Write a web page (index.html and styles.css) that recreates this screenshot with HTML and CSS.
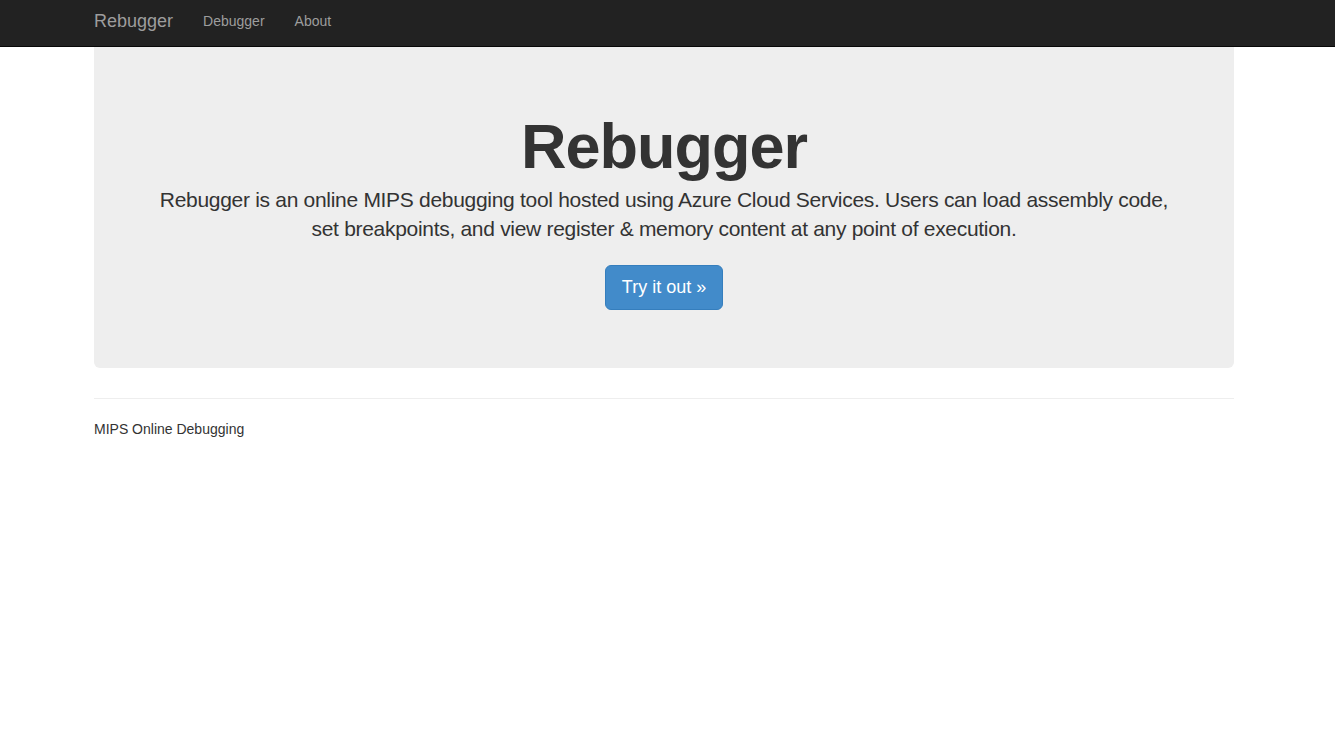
FILE: index.html
```html
<!DOCTYPE html>
<html lang="en">
<head>
<meta charset="utf-8">
<title>Rebugger</title>
<link rel="stylesheet" href="styles.css">
</head>
<body>
<nav class="navbar">
  <div class="container nav-inner">
    <a class="brand" href="#">Rebugger</a>
    <ul class="nav-links">
      <li><a href="#">Debugger</a></li>
      <li><a href="#">About</a></li>
    </ul>
  </div>
</nav>
<div class="container">
  <div class="jumbotron">
    <h1 class="title">Rebugger</h1>
    <p class="lead">Rebugger is an online MIPS debugging tool hosted using Azure Cloud Services. Users can load assembly code, set breakpoints, and view register &amp; memory content at any point of execution.</p>
    <a class="btn" href="#">Try it out &raquo;</a>
  </div>
  <hr class="divider">
  <footer class="footer">MIPS Online Debugging</footer>
</div>
</body>
</html>
```
FILE: styles.css
```css
* { box-sizing: border-box; }
html, body { margin: 0; padding: 0; }
body {
  font-family: "Liberation Sans", Arial, sans-serif;
  font-size: 14px;
  line-height: 20px;
  color: #333;
  background: #fff;
}
a { text-decoration: none; }
.container {
  width: 1140px;
  margin-left: 94px;
}
.navbar {
  background: #222;
  border-bottom: 1px solid #080808;
  height: 47px;
}
.nav-inner {
  display: flex;
  align-items: flex-start;
}
.brand {
  font-size: 18px;
  line-height: 20px;
  padding: 11px 15px 0 0;
  color: #9d9d9d;
}
.nav-links {
  list-style: none;
  margin: 0;
  padding: 0;
  display: flex;
}
.nav-links a {
  display: block;
  color: #9d9d9d;
  font-size: 14px;
  line-height: 20px;
  padding: 11px 15px 0;
}
.jumbotron {
  background: #eee;
  border-radius: 0 0 6px 6px;
  padding: 65px 50px 58px;
  text-align: center;
}
.title {
  font-size: 63px;
  line-height: 69px;
  font-weight: 700;
  letter-spacing: -1px;
  margin: 0 0 4px;
  color: #333;
}
.lead {
  font-size: 21px;
  line-height: 29px;
  letter-spacing: -0.3px;
  margin: 0 0 22px;
  color: #333;
}
.btn {
  display: inline-block;
  background: #428bca;
  border: 1px solid #357ebd;
  color: #fff;
  font-size: 18px;
  line-height: 23px;
  padding: 10px 16px;
  border-radius: 6px;
}
.divider {
  border: 0;
  border-top: 1px solid #eee;
  margin: 30px 0 20px;
  height: 0;
}
.footer {
  font-size: 14px;
  line-height: 20px;
  color: #333;
}
```
